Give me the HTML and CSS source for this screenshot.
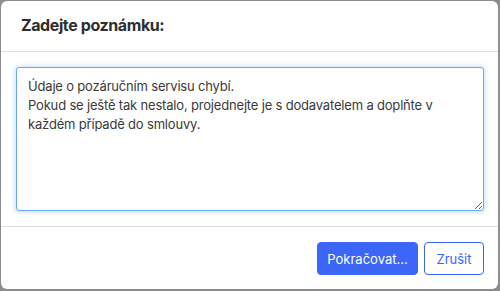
FILE: index.html
```html
<!DOCTYPE html>
<html lang="cs">
<head>
<meta charset="utf-8">
<link rel="stylesheet" href="styles.css">
</head>
<body>
<div class="backdrop">
  <div class="modal">
    <div class="modal-header">
      <h2 class="modal-title">Zadejte poznámku:</h2>
    </div>
    <div class="modal-body">
      <textarea class="note">Údaje o pozáručním servisu chybí.
Pokud se ještě tak nestalo, projednejte je s dodavatelem a doplňte v každém případě do smlouvy.</textarea>
    </div>
    <div class="modal-footer">
      <button class="btn btn-primary">Pokračovat...</button>
      <button class="btn btn-secondary">Zrušit</button>
    </div>
  </div>
</div>
</body>
</html>
```

FILE: styles.css
```css
html, body {
  margin: 0;
  padding: 0;
  width: 500px;
  height: 291px;
  overflow: hidden;
  background: #8c8c8c;
  font-family: Inter, "Liberation Sans", sans-serif;
}
.backdrop {
  padding: 1px 2px 2px 1px;
  height: 291px;
  box-sizing: border-box;
}
.modal {
  background: #fff;
  border-radius: 6px;
  height: 288px;
  width: 497px;
  display: flex;
  flex-direction: column;
  box-sizing: border-box;
}
.modal-header {
  height: 51px;
  border-bottom: 1px solid #dedede;
  display: flex;
  align-items: center;
  padding: 0 20px 2px;
  box-sizing: border-box;
}
.modal-title {
  margin: 0;
  font-size: 16px;
  font-weight: 700;
  letter-spacing: -0.4px;
  color: #2e2e2e;
}
.modal-body {
  padding: 15px 14px 15px 15px;
  border-bottom: 1px solid #dedede;
}
.note {
  display: block;
  width: 100%;
  height: 144px;
  box-sizing: border-box;
  resize: vertical;
  border: 1px solid #6aa9ee;
  border-radius: 3px;
  box-shadow: 0 0 5px 1px rgba(100, 165, 240, 0.35);
  outline: none;
  padding: 9px 11px;
  font-family: Inter, "Liberation Sans", sans-serif;
  font-size: 13px;
  letter-spacing: -0.18px;
  line-height: 19px;
  color: #3a3a3a;
}
.modal-footer {
  flex: 1;
  display: flex;
  justify-content: flex-end;
  align-items: flex-start;
  gap: 6px;
  padding: 15px 14px 0 15px;
}
.btn {
  height: 33px;
  border-radius: 4px;
  font-family: Inter, "Liberation Sans", sans-serif;
  font-size: 13px;
  padding: 0 8px;
  cursor: pointer;
}
.btn-primary {
  width: 101px;
  background: #3b66f7;
  border: 1px solid #3b66f7;
  color: #fff;
}
.btn-secondary {
  width: 60px;
  background: #fff;
  border: 1px solid #3b66f7;
  color: #3b66f7;
}
```
